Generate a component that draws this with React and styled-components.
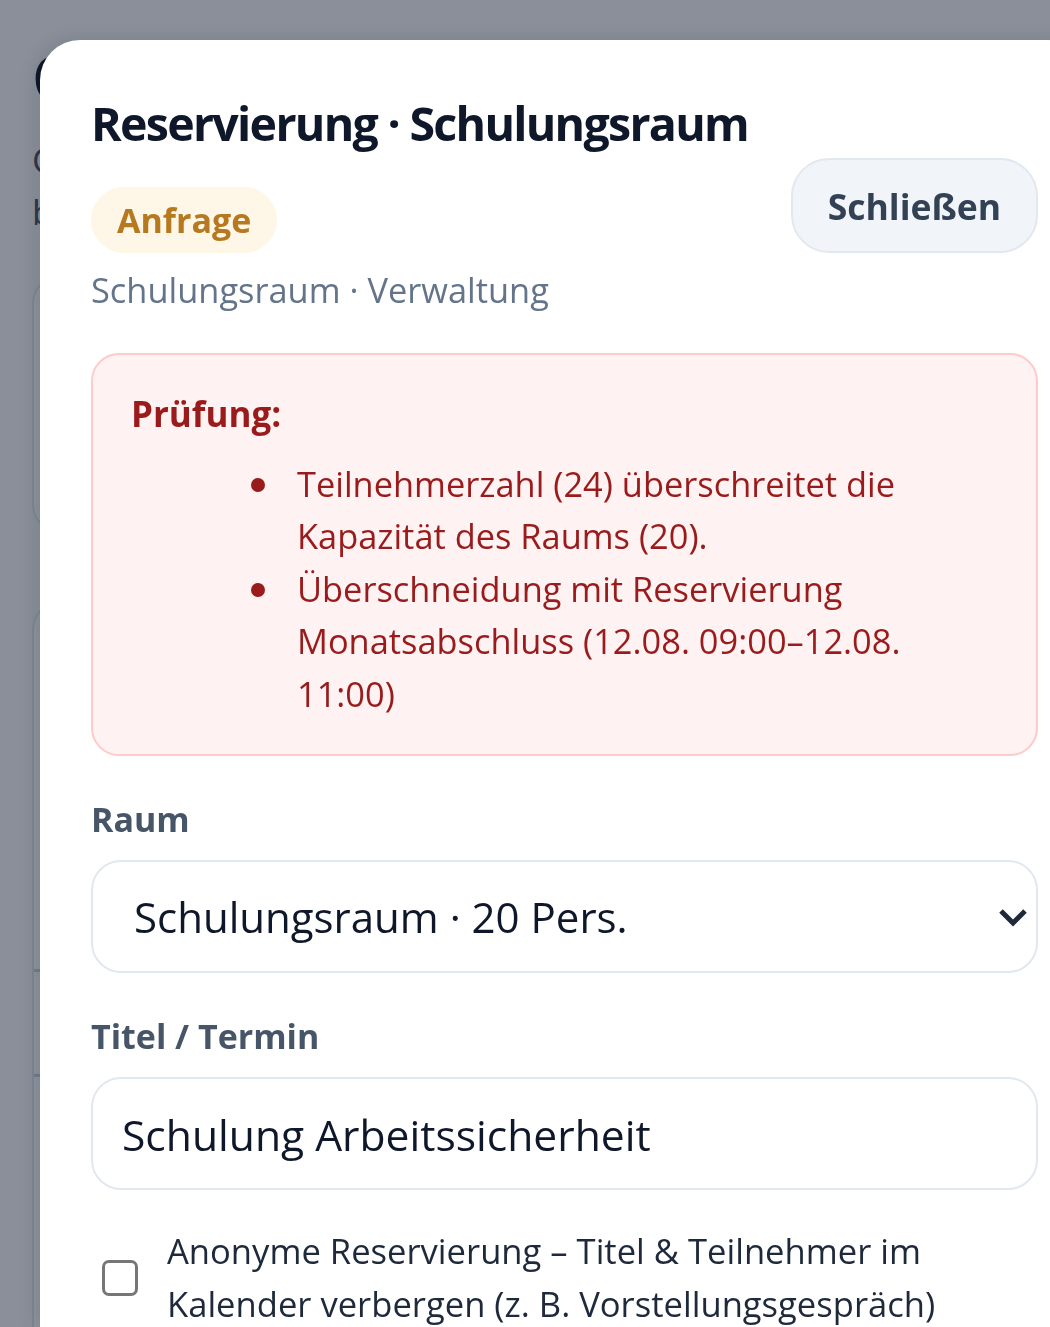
import React from "react";
import styled, { createGlobalStyle } from "styled-components";

const GlobalStyle = createGlobalStyle`
  html, body {
    margin: 0;
    padding: 0;
  }
  body {
    font-family: "Open Sans", "Noto Sans", sans-serif;
    background: #f8fafc;
    overflow: hidden;
    height: 1327px;
  }
  * { box-sizing: border-box; }
`;

/* ---------- page behind the dialog ---------- */
const Page = styled.div`
  padding: 40px 30px 0 32px;
`;

const PageHeading = styled.h1`
  margin: 0;
  font-size: 62px;
  line-height: 1.2;
  font-weight: 700;
  color: #0f172a;
`;

const PageIntro = styled.p`
  margin: 20px 0 0;
  font-size: 35px;
  line-height: 52px;
  color: #475569;
`;

const PageCard = styled.div`
  margin-top: ${(p) => p.$gap}px;
  height: ${(p) => p.$height}px;
  background: #ffffff;
  border: 2px solid #e2e8f0;
  border-radius: 30px;
  display: flex;
  flex-direction: column;
`;

const PageCardRow = styled.div`
  height: ${(p) => p.$height}px;
  border-bottom: 3px solid #cbd5e1;
`;

/* ---------- overlay + dialog ---------- */
const Backdrop = styled.div`
  position: fixed;
  inset: 0;
  background: rgba(15, 23, 42, 0.47);
`;

const Dialog = styled.div`
  margin: 40px 0 0 40px;
  width: 1049px;
  height: calc(100% - 40px);
  background: #ffffff;
  border-radius: 40px 40px 0 0;
  padding: 55px 51px 0 51px;
  overflow: hidden;
  box-shadow: -4px 0 18px rgba(15, 23, 42, 0.12);
`;

const Header = styled.div`
  display: flex;
  align-items: center;
  justify-content: space-between;
  gap: 20px;
`;

const HeaderMain = styled.div`
  display: flex;
  flex-direction: column;
  align-items: flex-start;
`;

const Title = styled.h2`
  margin: 0;
  font-size: 46.5px;
  line-height: 56px;
  font-weight: 700;
  letter-spacing: -1.7px;
  color: #0f172a;
  white-space: nowrap;
`;

const Badge = styled.span`
  margin-top: 36px;
  display: inline-block;
  padding: 7.5px 26px;
  border-radius: 999px;
  background: #fef6e7;
  color: #b7791f;
  font-size: 34px;
  font-weight: 700;
  line-height: 51px;
`;

const Meta = styled.div`
  margin-top: 11px;
  font-size: 34.4px;
  line-height: 52.5px;
  color: #64748b;
`;

const CloseButton = styled.button`
  flex-shrink: 0;
  font-family: inherit;
  font-size: 35.5px;
  font-weight: 700;
  line-height: 54px;
  padding: 18.5px 35px;
  border: 2px solid #e2e8f0;
  background: #f1f5f9;
  color: #334155;
  border-radius: 38px;
  cursor: pointer;
`;

const Alert = styled.div`
  margin-top: 36px;
  border: 2px solid #fecaca;
  background: #fef2f2;
  border-radius: 28px;
  padding: 33px 38px 34px;
  color: #991b1b;
`;

const AlertTitle = styled.div`
  font-size: 35px;
  font-weight: 700;
  line-height: 52.5px;
`;

const AlertList = styled.ul`
  margin: 17.5px 0 0;
  padding: 0 0 0 166px;
  list-style: none;
  font-size: 34.4px;
  line-height: 52.5px;
`;

const AlertItem = styled.li`
  position: relative;
  &::before {
    content: "";
    position: absolute;
    left: -46px;
    top: 20px;
    width: 14px;
    height: 14px;
    border-radius: 50%;
    background: currentColor;
  }
`;

const FieldLabel = styled.label`
  display: block;
  margin-top: 38px;
  font-size: 34px;
  font-weight: 700;
  line-height: 51px;
  color: #475569;
`;

const SelectWrap = styled.div`
  position: relative;
  margin-top: 15px;
`;

const Select = styled.select`
  display: block;
  width: 100%;
  height: 113px;
  border: 2px solid #e2e8f0;
  border-radius: 30px;
  padding: 0 80px 0 41px;
  font-family: inherit;
  font-size: 42px;
  color: #0f172a;
  background: #ffffff;
  appearance: none;
  -webkit-appearance: none;
  outline: none;
`;

const Chevron = styled.svg`
  position: absolute;
  right: 8px;
  top: 50%;
  transform: translateY(-50%);
  pointer-events: none;
`;

const TextInput = styled.input`
  display: block;
  margin-top: 15px;
  width: 100%;
  height: 113px;
  border: 2px solid #e2e8f0;
  border-radius: 30px;
  padding: 0 29px;
  font-family: inherit;
  font-size: 42.6px;
  color: #0f172a;
  background: #ffffff;
  outline: none;
`;

const CheckRow = styled.label`
  margin-top: 35px;
  display: flex;
  align-items: center;
  gap: 29px;
  padding-left: 11px;
`;

const Checkbox = styled.input`
  appearance: none;
  -webkit-appearance: none;
  flex-shrink: 0;
  margin: 0;
  width: 36px;
  height: 36px;
  border: 3px solid #767676;
  border-radius: 7px;
  background: #ffffff;
`;

const CheckText = styled.span`
  font-size: 34.6px;
  line-height: 52.5px;
  color: #1e293b;
`;

export default function App() {
  return (
    <>
      <GlobalStyle />
      <Page aria-hidden="true">
        <PageHeading>C</PageHeading>
        <PageIntro>
          C
          <br />
          b
        </PageIntro>
        <PageCard $gap={36} $height={260} />
        <PageCard $gap={66} $height={800}>
          <PageCardRow $height={370} />
          <PageCardRow $height={105} />
        </PageCard>
      </Page>

      <Backdrop>
        <Dialog role="dialog" aria-modal="true">
          <Header>
            <HeaderMain>
              <Title>Reservierung · Schulungsraum</Title>
              <Badge>Anfrage</Badge>
              <Meta>Schulungsraum · Verwaltung</Meta>
            </HeaderMain>
            <CloseButton type="button">Schließen</CloseButton>
          </Header>

          <Alert>
            <AlertTitle>Prüfung:</AlertTitle>
            <AlertList>
              <AlertItem>Teilnehmerzahl (24) überschreitet die Kapazität des Raums (20).</AlertItem>
              <AlertItem>
                Überschneidung mit Reservierung Monatsabschluss (12.08. 09:00–12.08. 11:00)
              </AlertItem>
            </AlertList>
          </Alert>

          <FieldLabel htmlFor="room">Raum</FieldLabel>
          <SelectWrap>
            <Select id="room" defaultValue="schulung">
              <option value="schulung">Schulungsraum · 20 Pers.</option>
              <option value="gross">Großer Besprechungsraum · 12 Pers.</option>
            </Select>
            <Chevron width="34" height="24" viewBox="0 0 34 24" aria-hidden="true">
              <polyline
                points="5,6 17,18 29,6"
                fill="none"
                stroke="#1e293b"
                strokeWidth="5"
                strokeLinejoin="miter"
              />
            </Chevron>
          </SelectWrap>

          <FieldLabel htmlFor="title">Titel / Termin</FieldLabel>
          <TextInput id="title" type="text" defaultValue="Schulung Arbeitssicherheit" />

          <CheckRow>
            <Checkbox type="checkbox" />
            <CheckText>
              Anonyme Reservierung – Titel &amp; Teilnehmer im Kalender verbergen (z. B. Vorstellungsgespräch)
            </CheckText>
          </CheckRow>
        </Dialog>
      </Backdrop>
    </>
  );
}
